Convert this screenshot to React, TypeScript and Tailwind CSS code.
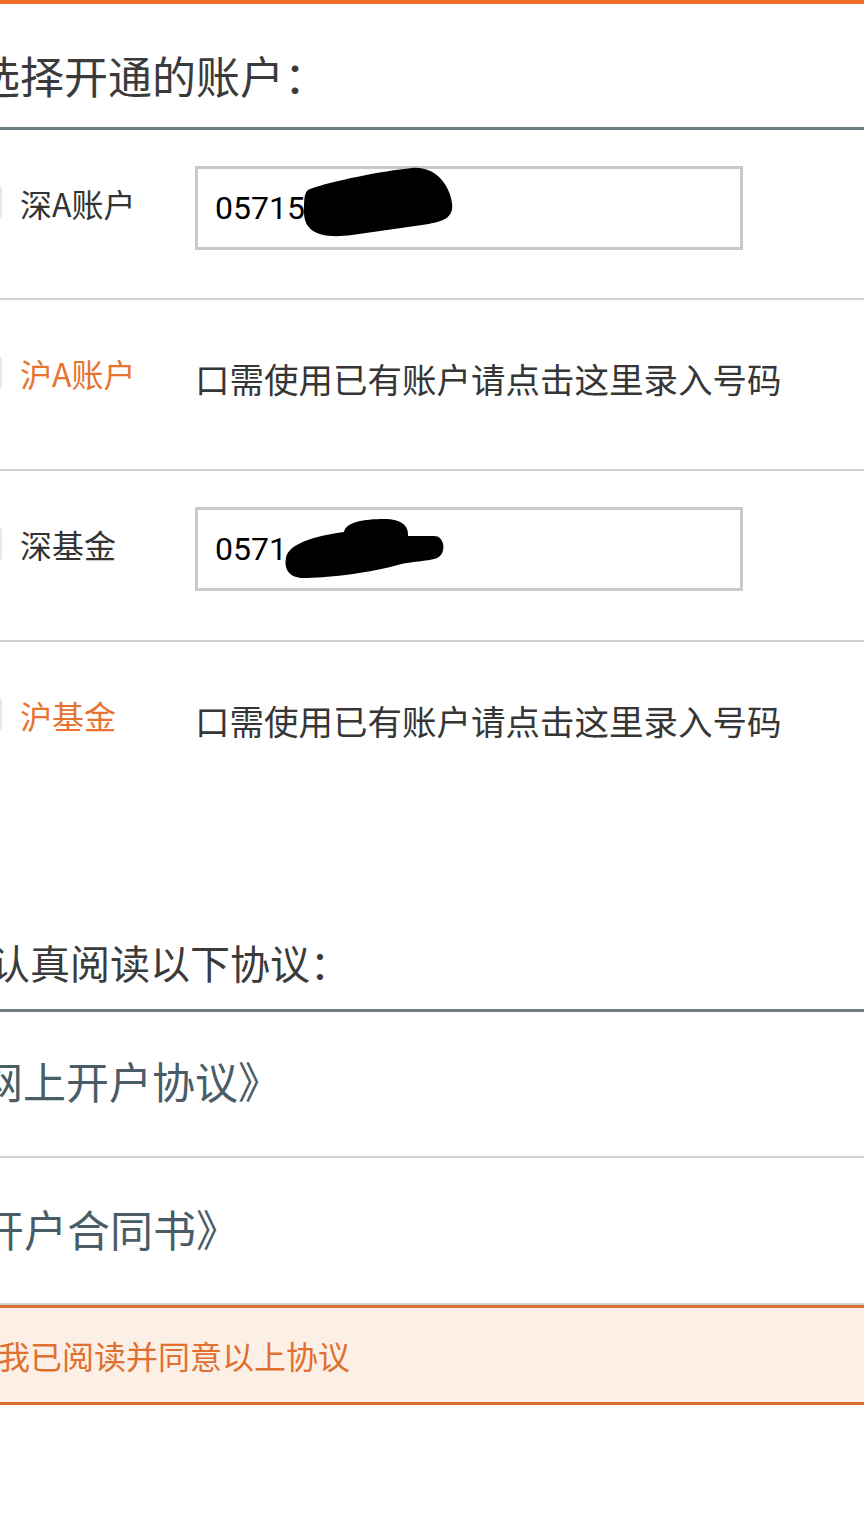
import React from 'react'

const font = "font-['Noto_Sans_CJK_SC','Noto_Sans',sans-serif]"

interface AccountRow {
  label: string
  shanghai: boolean
  value?: string
  blob?: 'a' | 'b'
  height: string
  border: boolean
}

const rows: AccountRow[] = [
  { label: '深A账户', shanghai: false, value: '05715', blob: 'a', height: 'h-[170px]', border: true },
  { label: '沪A账户', shanghai: true, height: 'h-[171px]', border: true },
  { label: '深基金', shanghai: false, value: '0571', blob: 'b', height: 'h-[171px]', border: true },
  { label: '沪基金', shanghai: true, height: 'h-[170px]', border: false },
]

// 遮挡涂抹
function Blob({ kind }: { kind: 'a' | 'b' }) {
  if (kind === 'a') {
    return (
      <svg className="absolute left-[104px] top-[-2px]" width="154" height="72" viewBox="0 0 154 72">
        <path
          d="M8 22 C30 14 80 4 110 1 C135 -1 148 20 150 36 C152 52 140 55 120 58 L50 68 C20 72 2 66 2 45 C2 32 2 24 8 22 Z"
          fill="#000"
        />
      </svg>
    )
  }
  return (
    <svg className="absolute left-[86px] top-[8px]" width="164" height="64" viewBox="0 0 164 64">
      <path
        d="M60 14 C62 4 80 1 100 1 C118 1 125 8 124 18 L150 18 C160 18 162 32 156 38 C150 44 130 42 110 48 C80 56 40 60 20 60 C4 60 0 50 2 40 C4 26 30 18 60 14 Z"
        fill="#000"
      />
    </svg>
  )
}

export default function App() {
  return (
    <div className={`min-h-[1536px] overflow-hidden bg-white ${font}`}>
      <div className="h-[4px] bg-[#f06d22]" />

      {/* 选择账户 */}
      <div className="h-[126px] border-b-[3px] border-[#6e7f84] pt-[49px]">
        <p className="ml-[-68px] whitespace-nowrap text-[44px] leading-[44px] text-[#3b3b3b]">请选择开通的账户：</p>
      </div>

      {rows.map((row) => (
        <div
          key={row.label}
          className={`${row.height} pt-[36px] ${row.border ? 'border-b-2 border-[#cdd4d4]' : ''}`}
        >
          <div className="flex h-[84px] items-center">
            <div className="ml-[-34px] mb-[10px] h-[34px] w-[36px] shrink-0 rounded-sm border-2 border-[#e6e8e8]" />
            <span
              className={`mb-[10px] ml-[18px] w-[175px] shrink-0 whitespace-nowrap text-[32px] leading-[32px] ${
                row.shanghai ? 'text-[#e8732f]' : 'text-[#333]'
              }`}
            >
              {row.label}
            </span>
            {row.value ? (
              <div className="relative flex h-[84px] w-[548px] items-center border-[3px] border-[#c9c9c9] bg-white pl-[17px]">
                <span className="font-['Roboto',sans-serif] text-[32px] leading-[32px] text-black">{row.value}</span>
                {row.blob && <Blob kind={row.blob} />}
              </div>
            ) : (
              <span className="whitespace-nowrap text-[34.5px] leading-[34px] text-[#363636]">
                口需使用已有账户请点击这里录入号码
              </span>
            )}
          </div>
        </div>
      ))}

      {/* 协议 */}
      <div className="h-[200px] border-b-[3px] border-[#6e7f84] pt-[130px]">
        <p className="ml-[-50px] whitespace-nowrap text-[40px] leading-[40px] text-[#3b3b3b]">请认真阅读以下协议：</p>
      </div>

      <div className="h-[146px] border-b-2 border-[#cdd4d4] pt-[47px]">
        <p className="ml-[-63px] whitespace-nowrap text-[43px] leading-[42px] text-[#4a5d67]">《网上开户协议》</p>
      </div>
      <div className="h-[147px] border-b-2 border-[#cdd4d4] pt-[49px]">
        <p className="ml-[-62px] whitespace-nowrap text-[43px] leading-[42px] text-[#4a5d67]">《开户合同书》</p>
      </div>

      <div className="flex h-[100px] items-center border-y-[3px] border-[#db6d33] bg-[#fcefe5]">
        <p className="ml-[-2px] whitespace-nowrap text-[32px] leading-[32px] text-[#e0702f]">我已阅读并同意以上协议</p>
      </div>
    </div>
  )
}
